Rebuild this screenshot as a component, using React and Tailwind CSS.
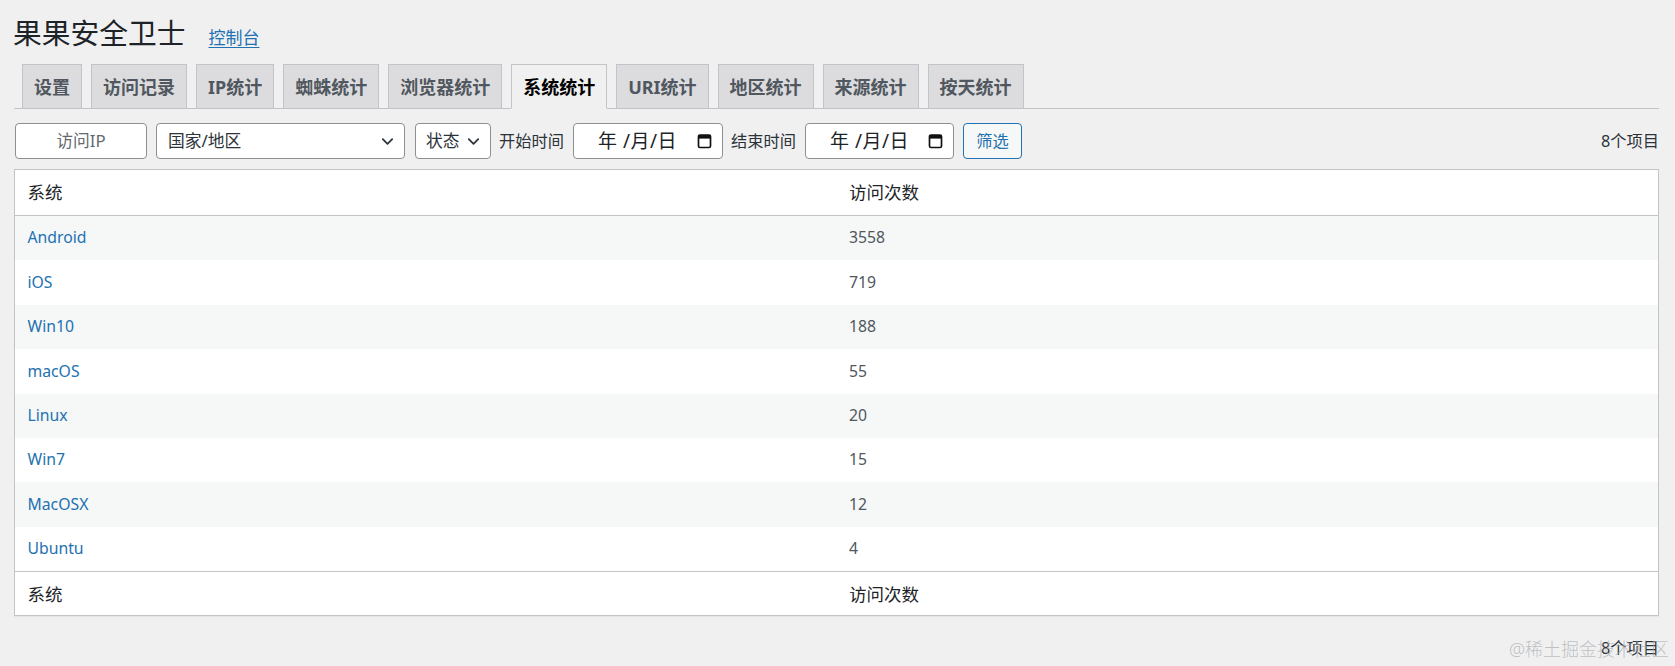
import React from 'react';

const tabs = ['设置', '访问记录', 'IP统计', '蜘蛛统计', '浏览器统计', '系统统计', 'URI统计', '地区统计', '来源统计', '按天统计'];
const activeTab = '系统统计';

const rows = [
  ['Android', 3558],
  ['iOS', 719],
  ['Win10', 188],
  ['macOS', 55],
  ['Linux', 20],
  ['Win7', 15],
  ['MacOSX', 12],
  ['Ubuntu', 4],
];

function Chevron() {
  return (
    <svg width="15" height="15" viewBox="0 0 16 16" className="shrink-0">
      <path d="M3 5.5 8 10.5l5-5" fill="none" stroke="#2c3338" strokeWidth="1.9" strokeLinecap="round" strokeLinejoin="round" />
    </svg>
  );
}

function CalendarIcon() {
  return (
    <svg width="15" height="16" viewBox="0 0 15 16" className="shrink-0">
      <rect x="1.5" y="2" width="12" height="12.5" rx="1.5" fill="none" stroke="#111" strokeWidth="1.7" />
      <rect x="1.5" y="2" width="12" height="3.6" fill="#111" />
    </svg>
  );
}

function DateBox({ width }) {
  return (
    <div className={`${width} h-[36px] border border-[#8c8f94] rounded-[4px] bg-white flex items-center pl-[24px] pr-[10px]`}>
      <span className="text-[19px] text-[#1d2327] leading-none tracking-[0.5px]">年 /月/日</span>
      <span className="ml-auto"><CalendarIcon /></span>
    </div>
  );
}

export default function App() {
  return (
    <div className="relative h-[666px] overflow-hidden bg-[#f0f0f1] pl-[14px] pr-[16px] font-['Noto_Sans','Noto_Sans_CJK_SC',sans-serif]">
      {/* Title */}
      <div className="flex items-baseline pt-[14px]">
        <h1 className="text-[28.75px] leading-[38px] font-normal text-[#1d2327] -ml-[1px]">果果安全卫士</h1>
        <a href="#" className="ml-[23px] text-[17px] text-[#2271b1] underline underline-offset-[3px]">控制台</a>
      </div>

      {/* Tabs */}
      <div className="mt-[12px] flex items-end gap-[9px] border-b border-[#c3c4c7] pl-[8px]">
        {tabs.map(t => (
          <div
            key={t}
            className={`-mb-px h-[45px] px-[11px] flex items-center border text-[18px] font-bold leading-none ${
              t === activeTab
                ? 'bg-[#f0f0f1] text-black border-[#c3c4c7] border-b-[#f0f0f1]'
                : 'bg-[#dcdcde] text-[#50575e] border-[#c3c4c7]'
            }`}
          >
            {t}
          </div>
        ))}
      </div>

      {/* Filters */}
      <div className="mt-[14px] flex items-center h-[36px] text-[16.25px] text-[#2c3338]">
        <div className="ml-[1px] w-[132px] h-[36px] border border-[#8c8f94] rounded-[4px] bg-white flex items-center justify-center text-[16.75px] text-[#646970]">
          访问IP
        </div>
        <div className="ml-[9px] w-[249px] h-[36px] border border-[#8c8f94] rounded-[4px] bg-white flex items-center pl-[11px] pr-[9px] text-[16.75px]">
          <span>国家/地区</span>
          <span className="ml-auto"><Chevron /></span>
        </div>
        <div className="ml-[10px] w-[76px] h-[36px] border border-[#8c8f94] rounded-[4px] bg-white flex items-center pl-[10px] pr-[9px] text-[16.75px]">
          <span>状态</span>
          <span className="ml-auto"><Chevron /></span>
        </div>
        <span className="ml-[8px]">开始时间</span>
        <div className="ml-[9px]"><DateBox width="w-[150px]" /></div>
        <span className="ml-[8px]">结束时间</span>
        <div className="ml-[9px]"><DateBox width="w-[149px]" /></div>
        <button className="ml-[9px] w-[59px] h-[36px] border border-[#2271b1] rounded-[4px] bg-[#f6f7f7] text-[#2271b1] text-[16.25px]">
          筛选
        </button>
        <span className="ml-auto">8个项目</span>
      </div>

      {/* Table */}
      <div className="mt-[10px] border border-[#c3c4c7] bg-white shadow-[0_1px_1px_rgba(0,0,0,0.04)]">
        <div className="grid grid-cols-2 h-[46px] items-center border-b border-[#c3c4c7] text-[17.5px] text-[#1d2327]">
          <div className="px-[12.5px]">系统</div>
          <div className="px-[12.5px]">访问次数</div>
        </div>
        {rows.map(([name, count], i) => (
          <div
            key={name}
            className={`grid grid-cols-2 h-[44.4px] items-center text-[15.75px] ${i % 2 === 0 ? 'bg-[#f6f7f7]' : 'bg-white'}`}
          >
            <div className="px-[12.5px]">
              <a href="#" className="text-[#2271b1]">{name}</a>
            </div>
            <div className="px-[12.5px] text-[#50575e]">{count}</div>
          </div>
        ))}
        <div className="grid grid-cols-2 h-[44px] items-center border-t border-[#c3c4c7] text-[17.5px] text-[#1d2327]">
          <div className="px-[12.5px]">系统</div>
          <div className="px-[12.5px]">访问次数</div>
        </div>
      </div>

      {/* Bottom count */}
      <div className="mt-[20px] flex justify-end text-[16.25px] leading-[24px] text-[#2c3338]">
        8个项目
      </div>

      {/* Watermark */}
      <div className="absolute right-[6px] bottom-[5px] text-[18px] leading-[24px] text-[#a7aaad]/70 font-light pointer-events-none">
        @稀土掘金技术社区
      </div>
    </div>
  );
}
